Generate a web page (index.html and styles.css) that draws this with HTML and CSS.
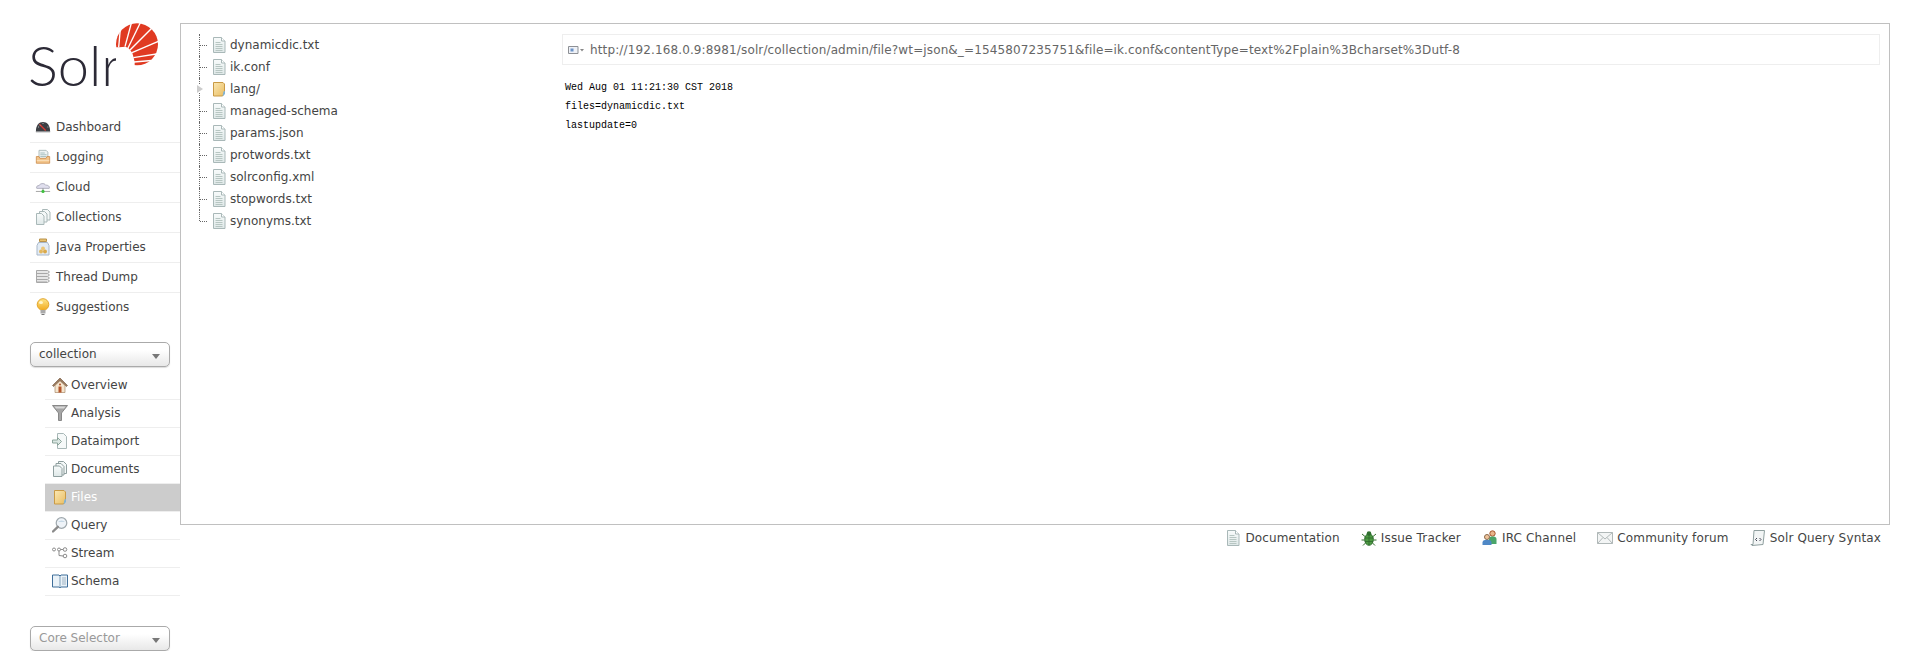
FILE: index.html
```html
<!DOCTYPE html>
<html lang="en">
<head>
<meta charset="utf-8">
<title>Solr Admin</title>
<link rel="stylesheet" href="styles.css">
</head>
<body>
<svg class="defs" width="0" height="0" aria-hidden="true">
  <defs>
    <linearGradient id="folderFill" x1="0" y1="0" x2="1" y2="1"><stop offset="0" stop-color="#fbe8b4"/><stop offset="1" stop-color="#e9bd62"/></linearGradient>
    <linearGradient id="pageFill" x1="0" y1="0" x2="0" y2="1"><stop offset="0" stop-color="#f8fbfb"/><stop offset="1" stop-color="#dfe8e8"/></linearGradient>
    <linearGradient id="bulbFill" x1="0" y1="0" x2="0" y2="1"><stop offset="0" stop-color="#fde68a"/><stop offset="1" stop-color="#f2a91d"/></linearGradient>
    <symbol id="i-page" viewBox="0 0 16 16"><path d="M2.500 .5h8l3.500 3.500v11.500h-11.500z" fill="url(#pageFill)" stroke="#a9b8b8"/><path d="M10.500 .5v3.500h3.500" fill="#fff" stroke="#a9b8b8"/><path d="M4.500 5.500h5M4.500 7.500h7M4.500 9.500h7M4.500 11.500h7M4.500 13.500h7" stroke="#b7c6c2"/></symbol>
    <symbol id="i-folder" viewBox="0 0 16 16"><path d="M2.500 1.500h9.500l1.500 1.500v9l-2 3h-9z" fill="url(#folderFill)" stroke="#c99a45"/><path d="M11.500 15.500l1-5 1.500-.5v3z" fill="#7fb2d6"/></symbol>
    <symbol id="i-dash" viewBox="0 0 18 16"><path d="M1 13C1 6 4.500 2.500 9 2.500S17 6 17 13z" fill="#3c3f44"/><path d="M1 12.500h16v1.500H1z" fill="#8f9194"/><path d="M5 5l7 7" stroke="#d83a32" stroke-width="1.500"/><path d="M9 3.500v1M3.500 8h1M14 8h1M5 5.500l.7.700" stroke="#cfd2d4"/></symbol>
    <symbol id="i-log" viewBox="0 0 18 18"><path d="M4.500 1.500h8l2 2v8h-10z" fill="#eef3f3" stroke="#a9b8b8"/><path d="M6 4.500h5M6 6.500h7M6 8.500h7" stroke="#9fb9b9"/><path d="M1.500 8.500h3l1 2h7l1-2h3v7.500h-15z" fill="#f3c58a" stroke="#cf9155"/><path d="M2 13h14" stroke="#fbe0bb"/></symbol>
    <symbol id="i-cloud" viewBox="0 0 18 16"><path d="M2 9.500c-1-2 .8-3.300 2.500-3 .8-2.500 6-3.500 7.500-.5 2.500-.5 5 1.500 4 3.500z" fill="#e0dfee" stroke="#a8a8b8"/><path d="M9 9.500v3" stroke="#888"/><path d="M1 13h16" stroke="#9a9a9a"/><circle cx="9" cy="13" r="1.800" fill="#3fc03f"/></symbol>
    <symbol id="i-coll" viewBox="0 0 16 16"><path d="M7.500 .5h5l2.500 2.500v8h-7.500z" fill="#f4f8f8" stroke="#a9b8b8"/><path d="M4.500 2.500h5l2.500 2.500v8h-7.500z" fill="#f4f8f8" stroke="#a9b8b8"/><path d="M1.500 4.500h5l2.500 2.500v8.500h-7.500z" fill="url(#pageFill)" stroke="#a9b8b8"/></symbol>
    <symbol id="i-java" viewBox="0 0 16 18"><path d="M4.500 1h7v2.500h-7z" fill="#e8c270" stroke="#b9924b"/><path d="M3.500 4.500h9l1.500 3v9.500h-12v-9.500z" fill="#e3ecf5" stroke="#a8b7c9"/><circle cx="6" cy="13.500" r="2" fill="#e3b75e"/><circle cx="10" cy="13.500" r="2" fill="#d9a94c"/><circle cx="8" cy="10.500" r="2" fill="#ecc678"/></symbol>
    <symbol id="i-thread" viewBox="0 0 16 16"><path d="M1.500 1.500h11l2 1.500-2 1.500 2 1.500-2 1.500 2 1.500-2 1.500 2 1.500-2 1.500h-11z" fill="#e6e6e6" stroke="#a8a8a8"/><path d="M2 4.500h10M2 7.500h10M2 10.500h10M2 13h10" stroke="#a8a8a8"/></symbol>
    <symbol id="i-bulb" viewBox="0 0 16 18"><circle cx="8" cy="6.500" r="5.800" fill="url(#bulbFill)" stroke="#e2a52b"/><ellipse cx="6" cy="4.500" rx="2" ry="1.500" fill="#fff6cf"/><path d="M5.500 12h5v3.500h-5z" fill="#aaa"/><path d="M6.500 16h3v1h-3z" fill="#777"/></symbol>
    <symbol id="i-home" viewBox="0 0 16 16"><path d="M8 1L.5 8.500l1 1L8 3.500l6.500 6 1-1z" fill="#9a7a5c" stroke="#6f5139" stroke-width=".6"/><path d="M3 8.500L8 4l5 4.500v7H3z" fill="#f5e6cf" stroke="#a98a6a" stroke-width=".7"/><path d="M6.500 9.500h3v6h-3z" fill="#b4552a"/><circle cx="8" cy="7.500" r="1" fill="#b4552a"/></symbol>
    <symbol id="i-funnel" viewBox="0 0 16 16"><path d="M.5 .5h15L9.500 8v7.500h-3V8z" fill="#a5a5a5" stroke="#888"/><path d="M2.500 1.500h11l-1.500 2h-8z" fill="#d8d8d8"/></symbol>
    <symbol id="i-import" viewBox="0 0 16 16"><path d="M5.500 .5h6l3 3v12h-9z" fill="#f6f9f9" stroke="#a9b8b8"/><path d="M.5 7h5V4.500l4 4-4 4V10h-5z" fill="#dbe7e3" stroke="#8da59c"/></symbol>
    <symbol id="i-doc" viewBox="0 0 16 16"><path d="M6.500 .5h5l3 3v9h-8z" fill="#f4f8f8" stroke="#8f9f9f"/><path d="M4 2.500h5l3 3v8.500h-8z" fill="#f4f8f8" stroke="#8f9f9f"/><path d="M1.500 5h6l2.500 2.500v8h-8.500z" fill="url(#pageFill)" stroke="#8f9f9f"/></symbol>
    <symbol id="i-query" viewBox="0 0 16 16"><circle cx="9.500" cy="6" r="5.300" fill="#eef3f8" stroke="#9fa8ad" stroke-width="1.200"/><path d="M6 5a4 3 0 0 1 7 0" fill="#c6d8e6"/><path d="M5.800 9.800L1 14.500" stroke="#8b8b8b" stroke-width="2.400" stroke-linecap="round"/></symbol>
    <symbol id="i-stream" viewBox="0 0 16 16" fill="#fff" stroke="#8b8b8b"><circle cx="2" cy="4.500" r="1.500"/><circle cx="7" cy="4.500" r="1.500"/><circle cx="13" cy="4.500" r="1.800"/><circle cx="13" cy="11" r="1.800"/><path d="M8.500 4.500h2.700M7 6v4.500l4 .5" fill="none"/></symbol>
    <symbol id="i-schema" viewBox="0 0 16 16"><path d="M.5 2h6.500l1 1 1-1h6.500v12h-6.500l-1 1-1-1H.500z" fill="#eaf2f8" stroke="#3f6e9a"/><path d="M8 3v11.500" stroke="#7f9fb9"/><path d="M10 5h4M10 7h4M10 9h4M10 11h4" stroke="#9fb3c3"/></symbol>
    <symbol id="i-bug" viewBox="0 0 16 16"><ellipse cx="8" cy="9.500" rx="4.300" ry="5.800" fill="#4d9a43" stroke="#2f6f2f"/><circle cx="8" cy="3.500" r="2.300" fill="#2f6f2f"/><path d="M8 4v11M3.500 8h9M4 11.500h8" stroke="#2a6429" stroke-width=".7"/><path d="M4 6.500L1 4M12 6.500L15 4M3.600 10H.5M12.400 10h3.100M4.500 13L2 15.500M11.500 13l2.500 2.500" stroke="#356f2f"/></symbol>
    <symbol id="i-irc" viewBox="0 0 16 16"><circle cx="10.500" cy="3.500" r="2.700" fill="#e9b58c" stroke="#a5562e"/><path d="M7 14V9c0-2 1.500-2.500 3.500-2.500S14.500 7 14.500 9v5z" fill="#4aa56a"/><circle cx="5" cy="7" r="2.500" fill="#efc39b" stroke="#8a6a4a"/><path d="M.5 15v-2.500c0-2 2-2.700 4.500-2.700s4.500.7 4.500 2.700V15z" fill="#4f88c6"/></symbol>
    <symbol id="i-mail" viewBox="0 0 16 14"><path d="M.5 1.500h15v11H.5z" fill="#f3f5f5" stroke="#b0b8b8"/><path d="M.5 1.500L8 8l7.500-6.500M.5 12.500l5.500-6M15.500 12.500l-5.500-6" fill="none" stroke="#b0b8b8"/></symbol>
    <symbol id="i-syntax" viewBox="0 0 16 16"><path d="M4 .5h10.500L13 14.500l-11 1-1-1h2z" fill="#f2f5f5" stroke="#8f9f9f"/><path d="M7 8L5.500 9.500 7 11M9.500 8L11 9.500 9.500 11" fill="none" stroke="#445"/></symbol>
    <symbol id="i-addr" viewBox="0 0 16 8"><path d="M.5 .5h9.500v7H.5z" fill="#eef1f7" stroke="#8d9095"/><path d="M2.500 2.500h3v3h-3z" fill="#6b93c8"/><path d="M12 3h4l-2 2.500z" fill="#888"/></symbol>
  </defs>
</svg>

<div class="page">
  <aside class="side">
    <div class="logo">
      <span class="logo-word">Solr</span>
      <svg class="logo-sun" viewBox="348 68 126 127" width="42" height="43">
        <circle cx="411" cy="131" r="63" fill="#e03a22"/>
        <path d="M340 140L358 140 376 138 385 142 391 149 397 157 401 171 404 184 404 200 340 200z" fill="#fff"/>
        <g stroke="#fff" stroke-width="4" fill="none">
          <path d="M424 60L384 142"/>
          <path d="M456 82L390 148"/>
          <path d="M480 120L396 156"/>
          <path d="M482 158L400 171"/>
          <path d="M472 178L402 184"/>
          <path d="M396 60L375 138"/>
          <path d="M362 74L356 140"/>
        </g>
      </svg>
    </div>

    <ul class="menu">
      <li class="menu-row"><svg class="ic"><use href="#i-dash"/></svg><span>Dashboard</span></li>
      <li class="menu-row"><svg class="ic"><use href="#i-log"/></svg><span>Logging</span></li>
      <li class="menu-row"><svg class="ic"><use href="#i-cloud"/></svg><span>Cloud</span></li>
      <li class="menu-row"><svg class="ic"><use href="#i-coll"/></svg><span>Collections</span></li>
      <li class="menu-row"><svg class="ic"><use href="#i-java"/></svg><span>Java Properties</span></li>
      <li class="menu-row"><svg class="ic"><use href="#i-thread"/></svg><span>Thread Dump</span></li>
      <li class="menu-row last"><svg class="ic"><use href="#i-bulb"/></svg><span>Suggestions</span></li>
    </ul>

    <div class="select first-select"><span>collection</span><i class="caret"></i></div>

    <ul class="submenu">
      <li class="sub-row"><svg class="ic-s"><use href="#i-home"/></svg><span>Overview</span></li>
      <li class="sub-row"><svg class="ic-s"><use href="#i-funnel"/></svg><span>Analysis</span></li>
      <li class="sub-row"><svg class="ic-s"><use href="#i-import"/></svg><span>Dataimport</span></li>
      <li class="sub-row"><svg class="ic-s"><use href="#i-doc"/></svg><span>Documents</span></li>
      <li class="sub-row active"><svg class="ic-s"><use href="#i-folder"/></svg><span>Files</span></li>
      <li class="sub-row"><svg class="ic-s"><use href="#i-query"/></svg><span>Query</span></li>
      <li class="sub-row"><svg class="ic-s"><use href="#i-stream"/></svg><span>Stream</span></li>
      <li class="sub-row"><svg class="ic-s"><use href="#i-schema"/></svg><span>Schema</span></li>
    </ul>

    <div class="select core-select"><span>Core Selector</span><i class="caret"></i></div>
  </aside>

  <main class="content">
    <section class="box">
      <ul class="tree">
        <li class="node"><svg class="ic-t"><use href="#i-page"/></svg><span>dynamicdic.txt</span></li>
        <li class="node"><svg class="ic-t"><use href="#i-page"/></svg><span>ik.conf</span></li>
        <li class="node closed"><svg class="ic-t"><use href="#i-folder"/></svg><span>lang/</span></li>
        <li class="node"><svg class="ic-t"><use href="#i-page"/></svg><span>managed-schema</span></li>
        <li class="node"><svg class="ic-t"><use href="#i-page"/></svg><span>params.json</span></li>
        <li class="node"><svg class="ic-t"><use href="#i-page"/></svg><span>protwords.txt</span></li>
        <li class="node"><svg class="ic-t"><use href="#i-page"/></svg><span>solrconfig.xml</span></li>
        <li class="node"><svg class="ic-t"><use href="#i-page"/></svg><span>stopwords.txt</span></li>
        <li class="node end"><svg class="ic-t"><use href="#i-page"/></svg><span>synonyms.txt</span></li>
      </ul>
      <div class="viewer">
        <div class="address"><svg class="ic-addr"><use href="#i-addr"/></svg><span>http://192.168.0.9:8981/solr/collection/admin/file?wt=json&amp;_=1545807235751&amp;file=ik.conf&amp;contentType=text%2Fplain%3Bcharset%3Dutf-8</span></div>
        <pre class="source">Wed Aug 01 11:21:30 CST 2018
files=dynamicdic.txt
lastupdate=0</pre>
      </div>
    </section>
    <footer class="links">
      <span class="link"><svg class="ic-t"><use href="#i-page"/></svg>Documentation</span>
      <span class="link"><svg class="ic-t"><use href="#i-bug"/></svg>Issue Tracker</span>
      <span class="link"><svg class="ic-t"><use href="#i-irc"/></svg>IRC Channel</span>
      <span class="link"><svg class="ic-t"><use href="#i-mail"/></svg>Community forum</span>
      <span class="link"><svg class="ic-t"><use href="#i-syntax"/></svg>Solr Query Syntax</span>
    </footer>
  </main>
</div>
</body>
</html>
```

FILE: styles.css
```css
* { box-sizing: border-box; }
html, body { margin: 0; padding: 0; background: #fff; }
body { font: 12px/14px "DejaVu Sans", sans-serif; color: #444; overflow: hidden; }
ul { list-style: none; margin: 0; padding: 0; }
.defs { position: absolute; }

.page { display: flex; align-items: flex-start; padding: 23px 16px 0 30px; }

.side { width: 150px; flex: none; }
.logo { position: relative; height: 90px; }
.logo-word { position: absolute; left: -2px; top: 10px; font: 300 56px/64px Lato, sans-serif; color: #2c2a36; }
.logo-sun { position: absolute; left: 86px; top: 0; }

.menu-row { display: flex; align-items: center; height: 30px; border-bottom: 1px solid #eee; padding: 0 0 2px 5px; }
.menu-row.last { border-bottom: 0; padding-bottom: 3px; }
.ic { width: 16px; height: 18px; flex: none; margin-right: 5px; }

.select { display: flex; align-items: center; justify-content: space-between; width: 140px; height: 25px; padding: 0 6px 2px 8px; border: 1px solid #aaa; border-radius: 5px; background: linear-gradient(#fff 30%, #e8e8e8); box-shadow: 0 1px 1px #ddd; }
.first-select { margin-top: 19px; }
.core-select { margin-top: 30px; color: #999; }
.caret { width: 0; height: 0; border: 4px solid transparent; border-top: 5px solid #777; border-bottom: 0; margin-right: 3px; margin-top: 5px; }

.submenu { margin: 5px 0 0 15px; }
.sub-row { display: flex; align-items: center; height: 28px; border-bottom: 1px solid #eee; padding: 0 0 2px 7px; }
.sub-row.active { background: #ccc; color: #fff; }
.ic-s { width: 16px; height: 16px; flex: none; margin-right: 3px; }

.content { flex: 1; min-width: 0; }
.box { display: flex; height: 502px; border: 1px solid #c0c0c0; }

.tree { width: 381px; flex: none; padding: 10px 0 0 18px; position: relative; }
.node { position: relative; display: flex; align-items: center; height: 22px; padding-left: 12px; }
.node::before { content: ""; position: absolute; left: 0; top: 0; bottom: 0; border-left: 1px dotted #666; }
.node::after { content: ""; position: absolute; left: 1px; top: 11px; width: 7px; border-top: 1px dotted #666; }
.node.end::before { bottom: 11px; }
.node.closed::after { width: 0; height: 0; top: 7px; left: -2px; border: 4px solid transparent; border-left: 6px solid #ccc; border-right: 0; background: #fff; }
.ic-t { width: 16px; height: 16px; flex: none; margin-right: 4px; }
.node .ic-t { margin-right: 3px; }

.viewer { flex: 1; min-width: 0; padding: 10px 9px 0 0; }
.address { display: flex; align-items: center; height: 31px; padding-left: 5px; border: 1px solid #eee; color: #666; letter-spacing: .13px; }
.ic-addr { width: 16px; height: 8px; flex: none; margin-right: 6px; }
.source { margin: 13px 0 0 3px; font: 10px/19px "Liberation Mono", monospace; color: #000; }

.links { display: flex; justify-content: flex-end; gap: 21px; padding: 6px 9px 0 0; letter-spacing: .15px; }
.link { display: flex; align-items: center; height: 14px; }
```
